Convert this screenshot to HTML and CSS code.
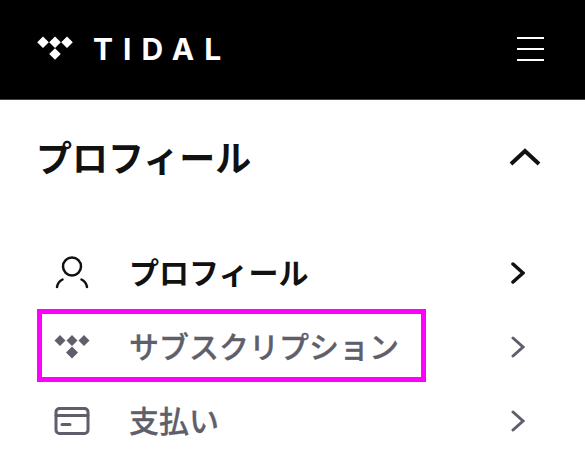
FILE: index.html
```html
<!DOCTYPE html>
<html lang="ja">
<head>
<meta charset="utf-8">
<title>TIDAL</title>
<link rel="stylesheet" href="styles.css">
</head>
<body>
<header class="topbar">
  <div class="brand">
    <svg class="brand-mark" viewBox="0 0 36 24" width="36" height="24" aria-hidden="true">
      <path d="M6 0.5 11.8 6.2 6 12 0.2 6.2Z M18 0.5 23.8 6.2 18 12 12.2 6.2Z M30 0.5 35.8 6.2 30 12 24.2 6.2Z M18 12.2 23.8 18 18 23.8 12.2 18Z"/>
    </svg>
    <span class="brand-name">TIDAL</span>
  </div>
  <button class="burger" aria-label="menu"><span></span><span></span><span></span></button>
</header>
<main class="panel">
  <div class="panel-head">
    <h1>プロフィール</h1>
    <svg class="caret" viewBox="0 0 32 18" width="32" height="18" aria-hidden="true"><path d="M2 16 16 3 30 16"/></svg>
  </div>
  <ul class="menu">
    <li class="item item-active">
      <svg class="ico" viewBox="0 0 36 36" width="36" height="36" aria-hidden="true"><circle cx="18" cy="11.500" r="9"/><path d="M3 32C3.500 28.500 5.500 26 8.500 24.500M33 32C32.500 28.500 30.500 26 27.500 24.500"/></svg>
      <span class="label">プロフィール</span>
      <svg class="chev" viewBox="0 0 14 22" width="14" height="22" aria-hidden="true"><path d="M2 2 12 11 2 20"/></svg>
    </li>
    <li class="item item-boxed">
      <svg class="ico ico-fill" viewBox="0 0 36 26" width="36" height="26" aria-hidden="true"><path d="M6 1 11.500 6.500 6 12 0.500 6.500Z M18 1 23.500 6.500 18 12 12.500 6.500Z M30 1 35.500 6.500 30 12 24.500 6.500Z M18 12.500 24 18.500 18 24.500 12 18.500Z"/></svg>
      <span class="label">サブスクリプション</span>
      <svg class="chev" viewBox="0 0 14 22" width="14" height="22" aria-hidden="true"><path d="M2 2 12 11 2 20"/></svg>
    </li>
    <li class="item">
      <svg class="ico ico-card" viewBox="0 0 36 30" width="36" height="30" aria-hidden="true"><rect x="2" y="2.500" width="32" height="25" rx="3.500"/><path d="M2 9.500H34M8 18.500H16"/></svg>
      <span class="label">支払い</span>
      <svg class="chev" viewBox="0 0 14 22" width="14" height="22" aria-hidden="true"><path d="M2 2 12 11 2 20"/></svg>
    </li>
  </ul>
</main>
</body>
</html>
```
FILE: styles.css
```css
html, body {
  margin: 0;
  padding: 0;
  background: #fff;
}
body {
  width: 585px;
  height: 473px;
  overflow: hidden;
  font-family: "Noto Sans CJK JP", "Liberation Sans", sans-serif;
  color: #111;
}
.topbar {
  height: 100px;
  box-sizing: border-box;
  background: #000;
  border-bottom: 1px solid #444;
  display: flex;
  align-items: center;
  justify-content: space-between;
  padding: 0 41px 2px 37px;
}
.brand {
  display: flex;
  align-items: center;
  gap: 20px;
}
.brand-mark {
  fill: #fff;
  display: block;
  margin-top: -1px;
}
.brand-name {
  color: #fff;
  font-family: "Inter", "Liberation Sans", sans-serif;
  font-weight: 700;
  font-size: 30px;
  line-height: 30px;
  letter-spacing: 10px;
}
.burger {
  width: 27px;
  height: 24px;
  padding: 0;
  background: none;
  border: 0;
  display: flex;
  flex-direction: column;
  justify-content: space-between;
}
.burger span {
  display: block;
  height: 2px;
  background: #fff;
}
.panel-head {
  height: 116px;
  display: flex;
  align-items: center;
  justify-content: space-between;
  padding: 0 44px 0 36px;
}
.panel-head h1 {
  margin: -4px 0 0;
  font-size: 36px;
  font-weight: 700;
  line-height: 50px;
}
.caret {
  fill: none;
  stroke: #111;
  stroke-width: 4;
  margin-top: -2px;
}
.menu {
  list-style: none;
  margin: 0;
  padding: 20px 0 0;
}
.item {
  position: relative;
  height: 74px;
  display: flex;
  align-items: center;
  padding: 0 60px 0 54px;
  color: #5f5f6b;
}
.item-active {
  color: #111;
}
.item-boxed::after {
  content: "";
  position: absolute;
  left: 37px;
  top: -1px;
  width: 389px;
  height: 73px;
  box-sizing: border-box;
  border: 5px solid #f0f;
}
.ico {
  flex: none;
  fill: none;
  stroke: currentColor;
  stroke-width: 2.500;
  stroke-linecap: round;
}
.ico-card {
  stroke-width: 3;
}
.ico-fill {
  fill: currentColor;
  stroke: none;
}
.label {
  flex: 1;
  margin: -5px 0 0 39px;
  font-size: 30px;
  font-weight: 700;
  line-height: 40px;
}
.item-boxed .label,
.item:last-child .label {
  font-weight: 500;
  -webkit-text-stroke: 0.3px currentColor;
}
.chev {
  flex: none;
  fill: none;
  stroke: currentColor;
  stroke-width: 3;
  stroke-linecap: round;
}
.item-active .chev {
  stroke-width: 3.500;
}
```
